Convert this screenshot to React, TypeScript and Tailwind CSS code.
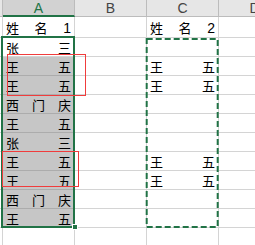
const rows: { a: string[]; c?: string[]; h: string }[] = [
  { a: ['姓', '名', '1'], c: ['姓', '名', '2'], h: 'h-[21px]' },
  { a: ['张', '三'], h: 'h-[19px]' },
  { a: ['王', '五'], c: ['王', '五'], h: 'h-[19px]' },
  { a: ['王', '五'], c: ['王', '五'], h: 'h-[19px]' },
  { a: ['西', '门', '庆'], h: 'h-[19px]' },
  { a: ['王', '五'], h: 'h-[19px]' },
  { a: ['张', '三'], h: 'h-[19px]' },
  { a: ['王', '五'], c: ['王', '五'], h: 'h-[19px]' },
  { a: ['王', '五'], c: ['王', '五'], h: 'h-[19px]' },
  { a: ['西', '门', '庆'], h: 'h-[19px]' },
  { a: ['王', '五'], h: 'h-[19px]' },
  { a: [], h: 'h-[19px]' },
]

function Spread({ chars }: { chars?: string[] }) {
  if (!chars || chars.length === 0) return null
  return (
    <div className="flex h-full items-center justify-between pl-[3px] pr-[3px] pt-[1px]">
      {chars.map((ch, i) => (
        <span key={i} className={/\d/.test(ch) ? "font-['Liberation_Sans'] text-[14px]" : ''}>
          {ch}
        </span>
      ))}
    </div>
  )
}

export default function App() {
  return (
    <div className="relative h-[245px] w-[255px] overflow-hidden bg-white font-['Noto_Sans_CJK_SC',sans-serif] text-[13px] leading-none text-black">
      {/* column headers */}
      <div className="flex h-[17px] font-['Liberation_Sans',sans-serif] text-[14px] text-[#444]">
        <div className="w-[3px] shrink-0 border-r border-b border-[#bcbcbc] bg-[#e6e6e6]" />
        <div className="flex w-[72px] shrink-0 items-center justify-center border-r border-b-2 border-r-[#bcbcbc] border-b-[#217346] bg-[#d2d2d2] text-[#217346]">A</div>
        <div className="flex w-[72px] shrink-0 items-center justify-center border-r border-b border-[#bcbcbc] bg-[#e6e6e6]">B</div>
        <div className="flex w-[72px] shrink-0 items-center justify-center border-r border-b border-[#bcbcbc] bg-[#e6e6e6]">C</div>
        <div className="flex w-[72px] shrink-0 items-center justify-center border-r border-b border-[#bcbcbc] bg-[#e6e6e6]">D</div>
      </div>

      {rows.map((r, i) => {
        const shaded = i >= 2 && i <= 10
        return (
          <div key={i} className={`flex ${r.h}`}>
            <div className="w-[3px] shrink-0 border-r border-b border-[#d4d4d4]" />
            <div className={`w-[72px] shrink-0 border-r border-b ${shaded ? 'border-[#acacac] bg-[#c6c6c6]' : 'border-[#d4d4d4]'}`}>
              <Spread chars={r.a} />
            </div>
            <div className="w-[72px] shrink-0 border-r border-b border-[#d4d4d4]" />
            <div className="w-[72px] shrink-0 border-r border-b border-[#d4d4d4]">
              <Spread chars={r.c} />
            </div>
            <div className="w-[72px] shrink-0 border-r border-b border-[#d4d4d4]" />
          </div>
        )
      })}

      {/* selection A2:A11 */}
      <div className="pointer-events-none absolute left-[1px] top-[36px] h-[192px] w-[74px] border-2 border-[#217346]" />
      <div className="absolute left-[72px] top-[224px] h-[6px] w-[6px] border border-white bg-[#217346]" />

      {/* red boxes */}
      <div className="pointer-events-none absolute z-10 left-[7px] top-[54px] h-[42px] w-[79px] border border-[#f03c3c]" />
      <div className="pointer-events-none absolute z-10 left-[2px] top-[151px] h-[36px] w-[77px] border border-[#f03c3c]" />

      {/* copy marquee around C */}
      <svg className="pointer-events-none absolute left-0 top-0" width="255" height="245">
        <rect x="146.7" y="39" width="71" height="188" fill="none" stroke="#217346" strokeWidth="2" strokeDasharray="6 3" />
      </svg>
    </div>
  )
}
